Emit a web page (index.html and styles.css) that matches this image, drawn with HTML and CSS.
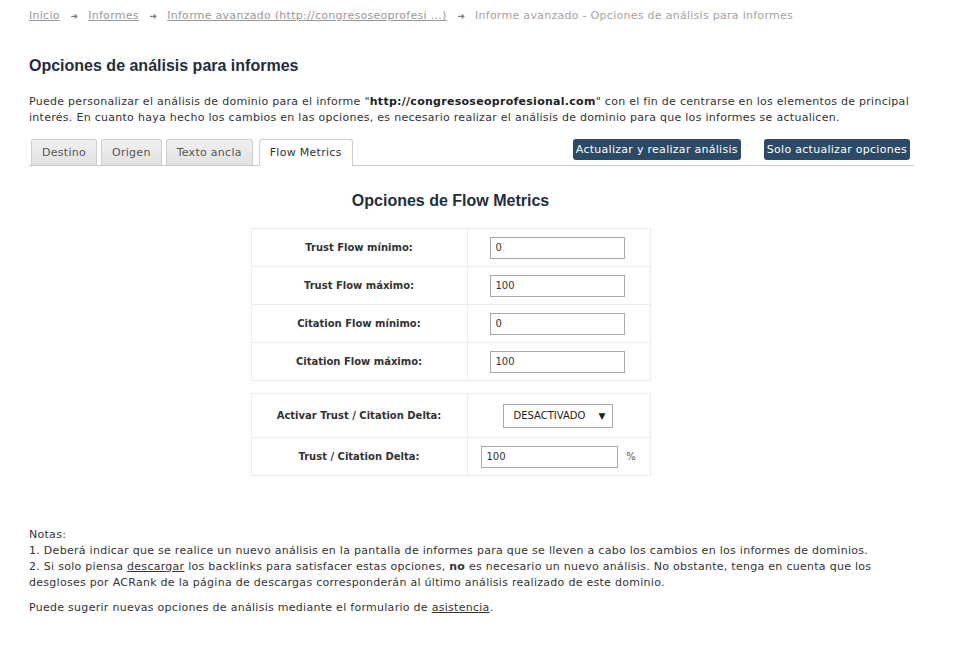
FILE: index.html
```html
<!DOCTYPE html>
<html lang="es">
<head>
    <meta charset="UTF-8">
    <title>Opciones de análisis para informes</title>
    <link rel="stylesheet" href="styles.css">
</head>
<body>
    <div class="page">
        <!-- Migas de pan -->
        <div class="breadcrumb">
            <a href="#">Inicio</a>
            <span class="arrow">&#10140;</span>
            <a href="#">Informes</a>
            <span class="arrow">&#10140;</span>
            <a href="#">Informe avanzado (http://congresoseoprofesi ...)</a>
            <span class="arrow">&#10140;</span>
            <span>Informe avanzado - Opciones de análisis para informes</span>
        </div>

        <h1>Opciones de análisis para informes</h1>
        <p class="intro">Puede personalizar el análisis de dominio para el informe "<b>http://congresoseoprofesional.com</b>" con el fin de centrarse en los elementos de principal interés. En cuanto haya hecho los cambios en las opciones, es necesario realizar el análisis de dominio para que los informes se actualicen.</p>

        <div class="tabbar">
            <ul class="tabs">
                <li><a href="#">Destino</a></li>
                <li><a href="#">Origen</a></li>
                <li><a href="#">Texto ancla</a></li>
                <li class="active"><a href="#">Flow Metrics</a></li>
            </ul>
            <div class="actions">
                <button type="button">Actualizar y realizar análisis</button>
                <button type="button">Solo actualizar opciones</button>
            </div>
        </div>

        <div class="panel">
            <h2>Opciones de Flow Metrics</h2>
            <table class="options">
                <tr>
                    <th>Trust Flow mínimo:</th>
                    <td><input type="text" value="0"></td>
                </tr>
                <tr>
                    <th>Trust Flow máximo:</th>
                    <td><input type="text" value="100"></td>
                </tr>
                <tr>
                    <th>Citation Flow mínimo:</th>
                    <td><input type="text" value="0"></td>
                </tr>
                <tr>
                    <th>Citation Flow máximo:</th>
                    <td><input type="text" value="100"></td>
                </tr>
            </table>

            <table class="options delta">
                <tr class="tall">
                    <th>Activar Trust / Citation Delta:</th>
                    <td class="center">
                        <div class="select">DESACTIVADO <span>&#9660;</span></div>
                    </td>
                </tr>
                <tr>
                    <th>Trust / Citation Delta:</th>
                    <td class="pct"><input type="text" value="100"> <span>%</span></td>
                </tr>
            </table>
        </div>

        <div class="notes">
            <p>Notas:<br>
            1. Deberá indicar que se realice un nuevo análisis en la pantalla de informes para que se lleven a cabo los cambios en los informes de dominios.<br>
            2. Si solo piensa <a href="#">descargar</a> los backlinks para satisfacer estas opciones, <b>no</b> es necesario un nuevo análisis. No obstante, tenga en cuenta que los desgloses por ACRank de la página de descargas corresponderán al último análisis realizado de este dominio.</p>
            <p>Puede sugerir nuevas opciones de análisis mediante el formulario de <a href="#">asistencia</a>.</p>
        </div>
    </div>
</body>
</html>
```

FILE: styles.css
```css
body {
    margin: 0;
    padding: 0;
    background-color: #fff;
    font-family: "DejaVu Sans", Verdana, sans-serif;
    font-size: 11px;
    letter-spacing: 0.28px;
    color: #3a3a3a;
}
.page {
    width: 885px;
    padding: 0 29px;
}
.breadcrumb {
    padding-top: 8px;
    height: 16px;
    line-height: 16px;
    color: #a3a3a3;
}
.breadcrumb a {
    color: #999;
}
.breadcrumb .arrow {
    font-size: 9px;
    color: #7a7a7a;
    margin: 0 6px 0 7px;
}
h1 {
    font-family: "Liberation Sans", Arial, sans-serif;
    font-size: 16px;
    letter-spacing: 0;
    color: #1f2e3e;
    margin: 33px 0 0;
    line-height: 18px;
}
.intro {
    margin: 19px 0 0;
    line-height: 16px;
    color: #333;
}
.intro b {
    color: #222;
}
.tabbar {
    display: flex;
    justify-content: space-between;
    align-items: flex-start;
    margin-top: 13px;
    border-bottom: 1px solid #c8c8c8;
    height: 26px;
}
.tabs {
    list-style: none;
    display: flex;
    margin: 0;
    padding: 0 0 0 2px;
}
.tabs li {
    margin-right: 4px;
}
.tabs li a {
    display: block;
    height: 25px;
    line-height: 25px;
    padding: 0 10px;
    border: 1px solid #cfcfcf;
    border-bottom: none;
    border-radius: 3px 3px 0 0;
    background: linear-gradient(#f0f0f0, #e2e2e2);
    color: #555;
    text-decoration: none;
}
.tabs li.active {
    margin-left: 2px;
}
.tabs li.active a {
    background: #fff;
    height: 26px;
    color: #333;
}
.actions {
    display: flex;
    gap: 23px;
    padding-right: 4px;
}
.actions button {
    font-family: "DejaVu Sans", Verdana, sans-serif;
    font-size: 11px;
    letter-spacing: 0.28px;
    height: 21px;
    padding: 0 3px;
    border: none;
    border-radius: 3px;
    background-color: #2b4a66;
    color: #fff;
    cursor: pointer;
}
.panel {
    width: 843px;
    text-align: center;
}
h2 {
    font-family: "Liberation Sans", Arial, sans-serif;
    font-size: 16px;
    letter-spacing: 0;
    color: #1f2e3e;
    margin: 26px 0 18px;
    line-height: 18px;
}
table.options {
    width: 400px;
    margin: 0 auto;
    border-collapse: collapse;
}
table.options th,
table.options td {
    border: 1px solid #ececec;
    height: 37px;
    padding: 0;
}
table.options th {
    width: 215px;
    color: #333;
    font-size: 10px;
    letter-spacing: 0;
}
table.options td {
    text-align: left;
    padding-left: 22px;
}
table.options input {
    font-family: "DejaVu Sans", Verdana, sans-serif;
    font-size: 10px;
    width: 135px;
    height: 22px;
    box-sizing: border-box;
    border: 1px solid #a9a9a9;
    padding: 0 5px;
    color: #333;
}
table.delta {
    margin-top: 12px;
}
table.delta tr.tall th,
table.delta tr.tall td {
    height: 43px;
}
table.delta td.center {
    padding-left: 35px;
}
.select {
    display: inline-flex;
    justify-content: space-between;
    align-items: center;
    width: 110px;
    height: 24px;
    box-sizing: border-box;
    border: 1px solid #a9a9a9;
    padding: 0 6px 0 10px;
    font-size: 10px;
    letter-spacing: 0;
    color: #222;
}
.select span {
    font-size: 9px;
}
table.delta td.pct {
    padding-left: 13px;
}
table.delta td.pct input {
    width: 137px;
}
table.delta td.pct span {
    margin-left: 5px;
    color: #555;
    font-size: 10px;
}
.notes {
    margin-top: 51px;
    line-height: 16px;
    color: #333;
}
.notes p {
    margin: 0 0 9px;
}
.notes a {
    color: #333;
}
```
